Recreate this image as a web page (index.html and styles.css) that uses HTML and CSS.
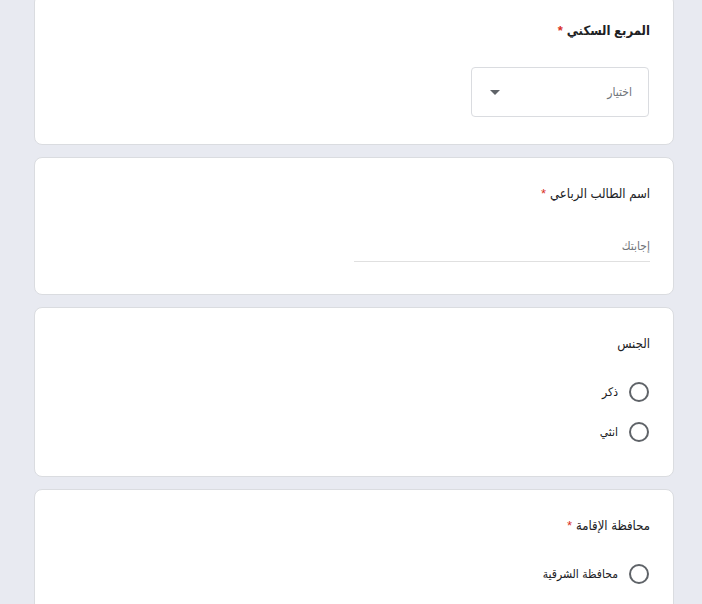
FILE: index.html
```html
<!DOCTYPE html>
<html lang="ar" dir="rtl">
<head>
  <meta charset="UTF-8" />
  <title>نموذج</title>
  <link rel="stylesheet" href="styles.css">
</head>
<body>
  <div class="form-page">

    <div class="card">
      <div class="q-title bold">المربع السكني <span class="req">*</span></div>
      <div class="select">
        <span class="select-text">اختيار</span>
        <span class="caret"></span>
      </div>
    </div>

    <div class="card">
      <div class="q-title">اسم الطالب الرباعي <span class="req">*</span></div>
      <div class="answer">
        <span class="placeholder">إجابتك</span>
      </div>
    </div>

    <div class="card">
      <div class="q-title">الجنس</div>
      <div class="options">
        <label class="option"><span class="radio"></span><span>ذكر</span></label>
        <label class="option"><span class="radio"></span><span>انثي</span></label>
      </div>
    </div>

    <div class="card">
      <div class="q-title">محافظة الإقامة <span class="req">*</span></div>
      <div class="options">
        <label class="option"><span class="radio"></span><span>محافظة الشرقية</span></label>
      </div>
    </div>

  </div>
</body>
</html>
```

FILE: styles.css
```css
:root {
  --bg: #e8eaf1;
  --card-bg: #fff;
  --border: #dadce0;
  --text: #202124;
  --muted: #70757a;
  --red: #d93025;
}

html, body {
  margin: 0;
  height: 100%;
  overflow: hidden;
}

body {
  background: var(--bg);
  color: var(--text);
  font-family: Arial, "DejaVu Sans Condensed", "DejaVu Sans", sans-serif;
}

.form-page {
  width: 640px;
  margin: -6px 28px 0 0;
  display: flex;
  flex-direction: column;
  gap: 12px;
}

.card {
  background: var(--card-bg);
  border: 1px solid var(--border);
  border-radius: 8px;
  padding: 23px;
}

.q-title {
  height: 24px;
  display: flex;
  align-items: center;
  gap: 4px;
  font-size: 13px;
  color: var(--text);
}

.q-title.bold {
  font-weight: bold;
}

.req {
  color: var(--red);
}

/* dropdown */
.select {
  margin: 25px 1px 4px 0;
  width: 178px;
  height: 50px;
  box-sizing: border-box;
  border: 1px solid var(--border);
  border-radius: 4px;
  display: flex;
  align-items: center;
  justify-content: space-between;
  padding: 0 16px 0 18px;
}

.select-text {
  font-size: 12px;
  color: var(--muted);
}

.caret {
  width: 0;
  height: 0;
  border-left: 5px solid transparent;
  border-right: 5px solid transparent;
  border-top: 5px solid #5f6368;
}

/* short answer */
.answer {
  margin-top: 16px;
  margin-bottom: 9px;
  width: 296px;
  height: 41px;
  box-sizing: border-box;
  border-bottom: 1px solid #e0e0e0;
  display: flex;
  align-items: flex-end;
  padding-bottom: 8px;
}

.placeholder {
  font-size: 12px;
  color: var(--muted);
}

/* radio list */
.options {
  margin-top: 17px;
  margin-bottom: 1px;
  display: flex;
  flex-direction: column;
}

.option {
  height: 40px;
  display: flex;
  align-items: center;
  gap: 11px;
  font-size: 12px;
}

.radio {
  width: 20px;
  height: 20px;
  box-sizing: border-box;
  border: 2px solid #5f6368;
  border-radius: 50%;
  margin-right: 1px;
}
```
